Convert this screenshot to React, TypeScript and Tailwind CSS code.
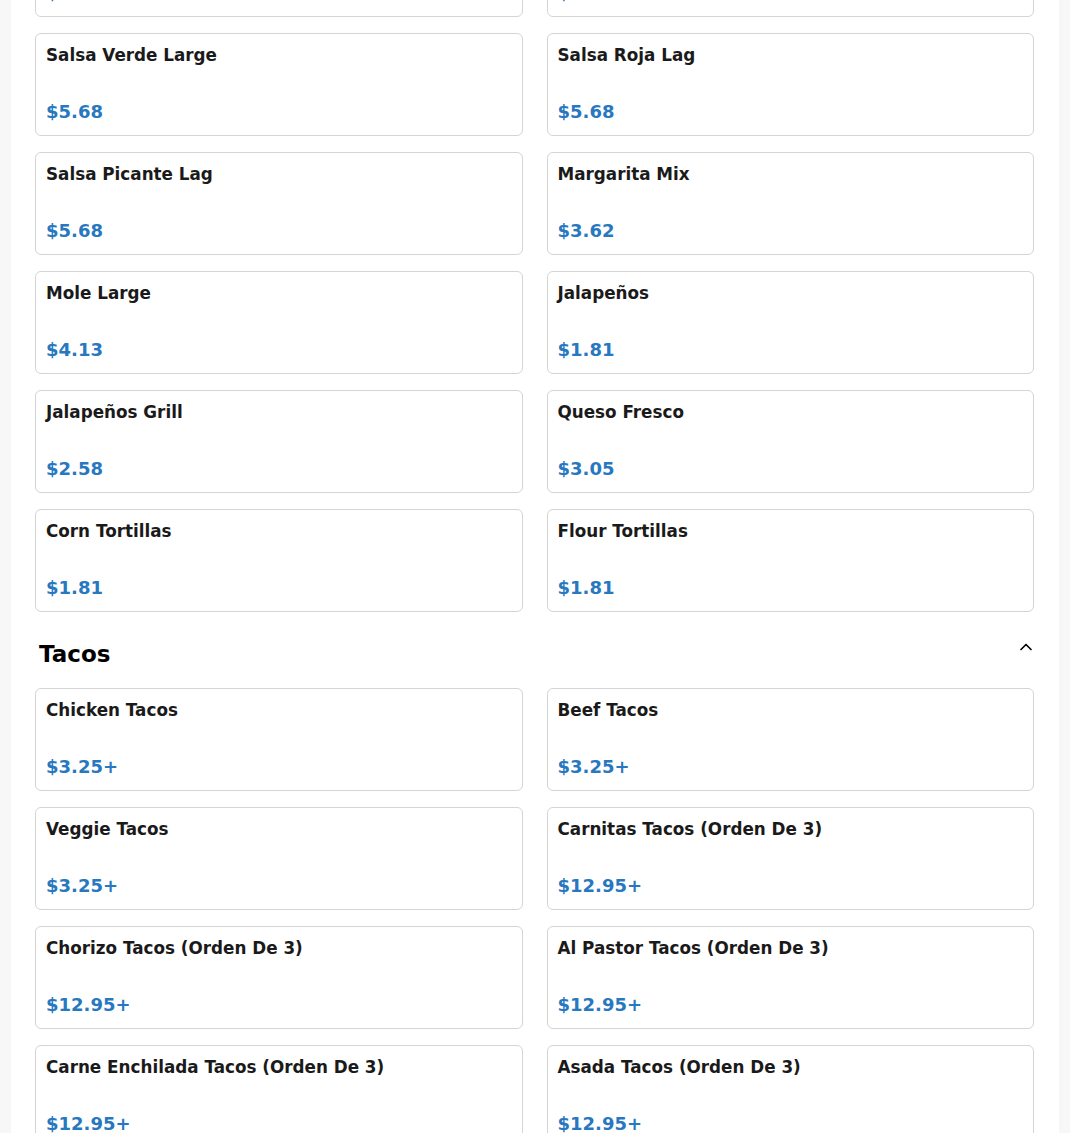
import React from 'react';
import { ChevronUp } from 'lucide-react';

type Item = { name: string; price: string };

const extras: Item[] = [
  { name: 'Salsa Verde Small', price: '$2.84' },
  { name: 'Salsa Roja Small', price: '$2.84' },
  { name: 'Salsa Verde Large', price: '$5.68' },
  { name: 'Salsa Roja Lag', price: '$5.68' },
  { name: 'Salsa Picante Lag', price: '$5.68' },
  { name: 'Margarita Mix', price: '$3.62' },
  { name: 'Mole Large', price: '$4.13' },
  { name: 'Jalapeños', price: '$1.81' },
  { name: 'Jalapeños Grill', price: '$2.58' },
  { name: 'Queso Fresco', price: '$3.05' },
  { name: 'Corn Tortillas', price: '$1.81' },
  { name: 'Flour Tortillas', price: '$1.81' },
];

const tacos: Item[] = [
  { name: 'Chicken Tacos', price: '$3.25+' },
  { name: 'Beef Tacos', price: '$3.25+' },
  { name: 'Veggie Tacos', price: '$3.25+' },
  { name: 'Carnitas Tacos (Orden De 3)', price: '$12.95+' },
  { name: 'Chorizo Tacos (Orden De 3)', price: '$12.95+' },
  { name: 'Al Pastor Tacos (Orden De 3)', price: '$12.95+' },
  { name: 'Carne Enchilada Tacos (Orden De 3)', price: '$12.95+' },
  { name: 'Asada Tacos (Orden De 3)', price: '$12.95+' },
];

function MenuCard({ item }: { item: Item }) {
  return (
    <div className="flex h-[103px] flex-col justify-between rounded-md border border-[#d4d4d4] bg-white p-[10px]">
      <h3 className="text-[16.8px] font-bold leading-[1.4] text-[#1a1a1a]">{item.name}</h3>
      <p className="text-[18px] font-bold leading-[1.5] text-[#2878c0]">{item.price}</p>
    </div>
  );
}

export default function App() {
  return (
    <div
      className="h-[1133px] overflow-hidden bg-[#f7f7f7]"
      style={{ fontFamily: '"DejaVu Sans", Verdana, sans-serif' }}
    >
      <div className="mx-[11px] min-h-full bg-white pl-6 pr-[25px]">
        <div className="-mt-[86px] grid grid-cols-2 gap-x-6 gap-y-4">
          {extras.map((item) => (
            <MenuCard key={item.name} item={item} />
          ))}
        </div>

        <div className="flex items-start justify-between pl-1 pt-[28px] pb-[20px]">
          <h2 className="text-[23px] font-bold leading-[28px] text-black">Tacos</h2>
          <ChevronUp className="-mr-[2px] -mt-[3px] h-5 w-5 text-black" strokeWidth={2} />
        </div>

        <div className="grid grid-cols-2 gap-x-6 gap-y-4">
          {tacos.map((item) => (
            <MenuCard key={item.name} item={item} />
          ))}
        </div>
      </div>
    </div>
  );
}
